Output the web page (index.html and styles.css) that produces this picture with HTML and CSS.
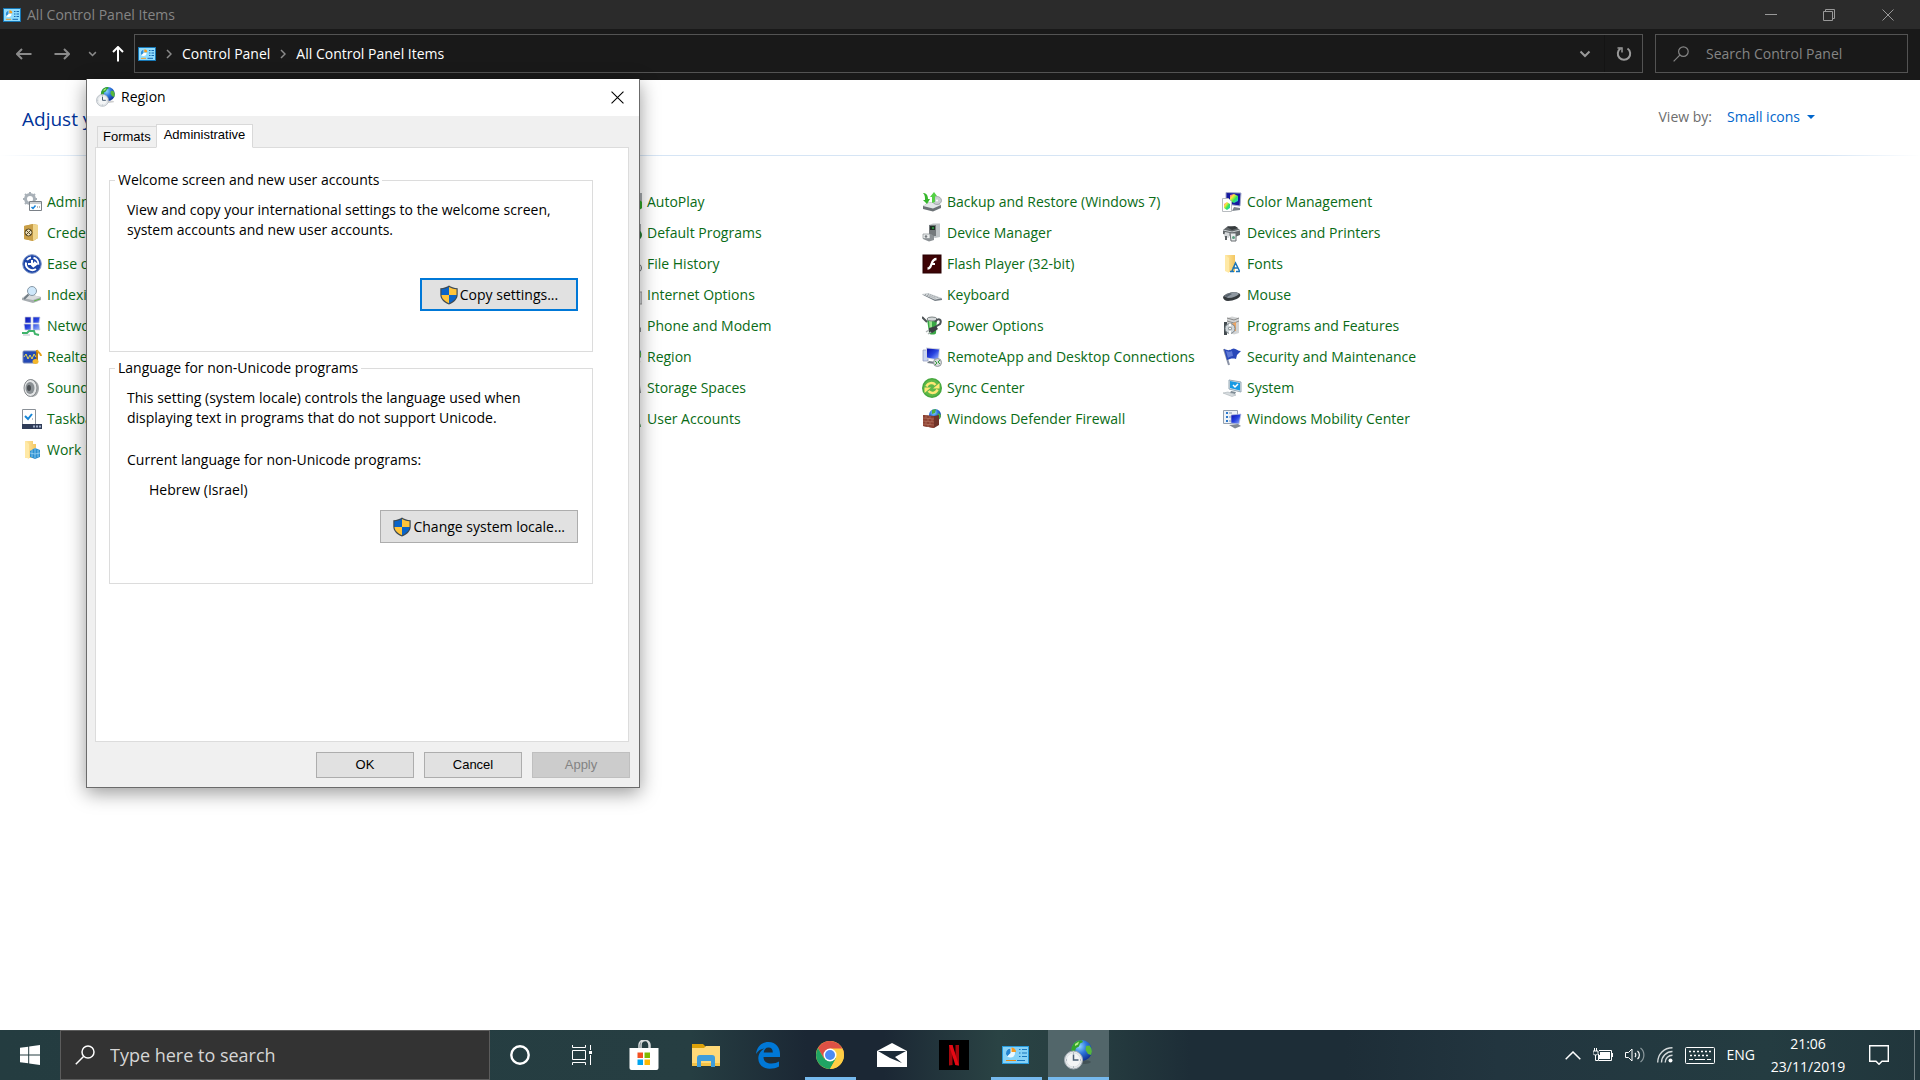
FILE: index.html
```html
<!DOCTYPE html>
<html lang="en">
<head>
    <meta charset="UTF-8">
    <meta name="viewport" content="width=device-width, initial-scale=1.0">
    <title>All Control Panel Items</title>
    <link rel="stylesheet" href="styles.css">
</head>
<body>
    <!-- shared icons and gradients -->
    <svg class="defs" aria-hidden="true">
        <defs>
            <radialGradient id="globeFill" cx="40%" cy="30%" r="75%">
                <stop offset="0" stop-color="#8fd8ff"/>
                <stop offset="0.45" stop-color="#2f77dd"/>
                <stop offset="1" stop-color="#0b2a8c"/>
            </radialGradient>
            <linearGradient id="screenFill" x1="0" y1="0" x2="1" y2="1">
                <stop offset="0" stop-color="#0a0fa8"/>
                <stop offset="0.5" stop-color="#2742e0"/>
                <stop offset="1" stop-color="#9db8ff"/>
            </linearGradient>
            <linearGradient id="metalFill" x1="0" y1="0" x2="1" y2="1">
                <stop offset="0" stop-color="#f2f2f2"/>
                <stop offset="1" stop-color="#7d8288"/>
            </linearGradient>
            <linearGradient id="folderFill" x1="0" y1="0" x2="1" y2="0">
                <stop offset="0" stop-color="#ffe9a6"/>
                <stop offset="1" stop-color="#f3c660"/>
            </linearGradient>
            <linearGradient id="rainbow" x1="0" y1="0" x2="1" y2="1">
                <stop offset="0" stop-color="#ff30d0"/>
                <stop offset="0.3" stop-color="#ffe93a"/>
                <stop offset="0.6" stop-color="#35e65a"/>
                <stop offset="1" stop-color="#20b8ff"/>
            </linearGradient>
        </defs>
        <symbol id="panel" viewBox="0 0 18 14">
            <rect width="18" height="14" fill="#1677b5"/>
            <rect x="1" y="1" width="16" height="12" fill="#8fdcff"/>
            <path d="M5.5 3a3 3 0 1 0 3 3h-3z" fill="#fff"/>
            <path d="M6.3 2.2v3h3a3 3 0 0 0-3-3z" fill="#f59b1e"/>
            <path d="M2.8 5.2a3 3 0 0 1 2.7-2.4V6l-2 2a3 3 0 0 1-.7-2.8z" fill="#2b8fd8"/>
            <path d="M11 3.5h1.5M13.5 3.5H16M11 6h1.5M13.5 6H16M11 8.5h1.5M13.5 8.5H16" stroke="#1769b0"/>
            <path d="M3 11.3h5" stroke="#f59b1e"/>
            <path d="M9.5 11.3H15" stroke="#1769b0"/>
        </symbol>
        <symbol id="region" viewBox="0 0 28 30">
            <ellipse cx="18" cy="22" rx="9" ry="2" fill="#00000030"/>
            <circle cx="17.5" cy="10.5" r="10.5" fill="url(#globeFill)"/>
            <path d="M8.500 5.500C10 2 14 0 18 .2l1 1.800-3 1.500-1 3-3 1.500-1 3.500-2.500 1.500c-2-2-1.500-5 0-7.500z" fill="#35a52c"/>
            <path d="M22 6l3.500-.5c2.500 3 3 6 1.500 9.500l-3-1-2.500-4z" fill="#57b83a"/>
            <path d="M11 4l4-2.500-1 3-3 1.500z" fill="#b9ef8a"/>
            <circle cx="9.500" cy="20" r="9" fill="#e6e9eb" stroke="#a2abb3"/>
            <circle cx="9.500" cy="20" r="7" fill="#f3f5f6" stroke="#cfd5da" stroke-width=".6"/>
            <path d="M9.500 14.500V20h5" fill="none" stroke="#4b5f74" stroke-width="1.500"/>
            <path d="M9.500 12.500v1M9.500 26.500v1M2 20h1M16 20h1" stroke="#8895a1"/>
        </symbol>
        <symbol id="shield" viewBox="0 0 18 20">
            <path d="M9 .5C7 2 4 3 .3 3.200v6.300c0 4.500 3.500 8 8.700 10 5.200-2 8.700-5.500 8.700-10V3.200C14 3 11 2 9 .5z" fill="#3f4a52"/>
            <path d="M9 2v8H1.500V4.300C4.700 4 7 3.200 9 2z" fill="#0a64c8"/>
            <path d="M9 2v8h7.500V4.300C13.300 4 11 3.200 9 2z" fill="#ffc43a"/>
            <path d="M9 10v8.300c-4-1.800-7.500-4.600-7.500-8.300z" fill="#ffc43a"/>
            <path d="M9 10v8.300c4-1.800 7.500-4.600 7.500-8.300z" fill="#0a64c8"/>
        </symbol>
        <symbol id="close" viewBox="0 0 12 12">
            <path d="M.5.5l11 11M11.500.5l-11 11" fill="none" stroke="currentColor"/>
        </symbol>
        <symbol id="down" viewBox="0 0 12 8">
            <path d="M1.500 1.500L6 6l4.500-4.500" fill="none" stroke="currentColor" stroke-width="2"/>
        </symbol>
        <symbol id="right" viewBox="0 0 6 10">
            <path d="M1 1l4 4-4 4" fill="none" stroke="currentColor" stroke-width="1.500"/>
        </symbol>
        <symbol id="magnifier" viewBox="0 0 20 20">
            <circle cx="13" cy="7" r="6" fill="none" stroke="currentColor" stroke-width="1.500"/>
            <path d="M8.500 11.500L.8 19.200" stroke="currentColor" stroke-width="1.500"/>
        </symbol>
    </svg>

    <header class="titlebar">
        <svg class="panel-icon" aria-hidden="true"><use href="#panel"/></svg>
        <span class="window-title">All Control Panel Items</span>
        <button class="window-button" aria-label="Minimize"><svg width="12" height="12" viewBox="0 0 12 12"><path d="M0 5.500h12" stroke="currentColor"/></svg></button>
        <button class="window-button" aria-label="Restore"><svg width="12" height="12" viewBox="0 0 12 12"><path d="M.5 2.500h9v9h-9zM2.500 2V.5h9v9H10" fill="none" stroke="currentColor"/></svg></button>
        <button class="window-button" aria-label="Close"><svg width="12" height="12"><use href="#close"/></svg></button>
    </header>

    <nav class="toolbar">
        <div class="nav-buttons">
            <button aria-label="Back"><svg width="16" height="12" viewBox="0 0 16 12"><path d="M6 1L1 6l5 5M1 6h14.500" fill="none" stroke="currentColor" stroke-width="2"/></svg></button>
            <button aria-label="Forward"><svg width="16" height="12" viewBox="0 0 16 12"><path d="M10 1l5 5-5 5M15 6H.5" fill="none" stroke="currentColor" stroke-width="2"/></svg></button>
            <button aria-label="Recent locations"><svg width="9" height="6"><use href="#down"/></svg></button>
            <button class="up" aria-label="Up"><svg width="12" height="16" viewBox="0 0 12 16"><path d="M1 6l5-5 5 5M6 1v14.500" fill="none" stroke="currentColor" stroke-width="2"/></svg></button>
        </div>
        <div class="address">
            <svg class="panel-icon" aria-hidden="true"><use href="#panel"/></svg>
            <svg class="crumb-arrow" aria-hidden="true"><use href="#right"/></svg>
            <a href="#">Control Panel</a>
            <svg class="crumb-arrow" aria-hidden="true"><use href="#right"/></svg>
            <a href="#">All Control Panel Items</a>
            <button class="history" aria-label="Previous locations"><svg width="12" height="8"><use href="#down"/></svg></button>
            <button class="refresh" aria-label="Refresh"><svg width="16" height="16" viewBox="0 0 16 16"><path d="M11.500 2.500a6.200 6.200 0 1 1-7 0" fill="none" stroke="currentColor" stroke-width="2"/><path d="M1.500 2h4.500v4.500" fill="none" stroke="currentColor" stroke-width="1.500"/></svg></button>
        </div>
        <label class="panel-search">
            <svg width="16" height="16" aria-hidden="true"><use href="#magnifier"/></svg>
            <input type="text" placeholder="Search Control Panel" aria-label="Search Control Panel">
        </label>
    </nav>

    <main class="content">
        <div class="content-header">
            <h1>Adjust your computer's settings</h1>
            <label for="view">View by:</label>
            <select id="view"><option>Small icons</option></select>
            <svg class="caret" width="8" height="4" viewBox="0 0 8 4" aria-hidden="true"><path d="M0 0h8L4 4z" fill="#0066cc"/></svg>
        </div>

        <div class="items">
            <ul class="column">
                <li><a href="#"><svg viewBox="0 0 20 20"><circle cx="8" cy="7" r="4.500" fill="none" stroke="#a9b1b8" stroke-width="3"/><path d="M8 0v3M8 11v3M1 7h3M12 7h3M3 2l2 2M11 10l2 2M13 2l-2 2M5 10l-2 2" stroke="#a9b1b8" stroke-width="2"/><path d="M7.500 9.500h12v9h-12z" fill="#fff" stroke="#7a8087"/><path d="M8 11h11" stroke="#9aa0a6"/><path d="M9.500 15l1.500 1.500 2.500-3" fill="none" stroke="#1580d8" stroke-width="1.500"/><path d="M15 15h1M17 15h1" stroke="#777"/></svg>Administrative Tools</a></li>
                <li><a href="#"><svg viewBox="0 0 20 20"><path d="M2 3l9-2 5 1v13l-5 3-9-2z" fill="#caa24d"/><path d="M11 1l5 1v13l-5 3z" fill="#f0d58c"/><path d="M2 3l9-2v17l-9-2z" fill="#c99f48"/><circle cx="6.500" cy="9.500" r="3.500" fill="#e8dcba" stroke="#5a4a25"/><path d="M4 7l5 5M9 7l-5 5" stroke="#5a4a25"/></svg>Credential Manager</a></li>
                <li><a href="#"><svg viewBox="0 0 20 20"><circle cx="10" cy="10" r="9.300" fill="#1d45a8" stroke="#7f97c8"/><path d="M5 6a6 6 0 0 1 4-2.500M11.500 3.700a6.500 6.500 0 0 1 4.800 7M4 8.500a6.500 6.500 0 0 0 10 6.500" fill="none" stroke="#fff" stroke-width="2"/><path d="M6 10h8M10 6v5l2 2M12 8l2.500 2-2.500 2" fill="none" stroke="#fff" stroke-width="2"/></svg>Ease of Access Center</a></li>
                <li><a href="#"><svg viewBox="0 0 20 20"><path d="M0 13l6-4 13 3v3l-8 3-11-3z" fill="#a7adb1"/><path d="M0 13l6-4 13 3-8 3z" fill="#d9dcde"/><path d="M12 16l6-2" stroke="#5fb94a"/><circle cx="10" cy="6" r="4.500" fill="#cfe8fb" stroke="#8798a6"/><path d="M6.500 9.500L2 14" stroke="#707b84" stroke-width="2"/></svg>Indexing Options</a></li>
                <li><a href="#"><svg viewBox="0 0 20 20"><path d="M3 1h6v6H3zM11 1h7l-1 6h-6zM2 8h7v6H3zM11 8h6l1 6h-7z" fill="url(#screenFill)" stroke="#c8cddd" stroke-width=".7"/><path d="M0 17h5l2-2h5l1 3 4 1" fill="none" stroke="#3eb36a" stroke-width="2"/><path d="M1 19h7" stroke="#b9c0c8"/></svg>Network and Sharing Center</a></li>
                <li><a href="#"><svg viewBox="0 0 20 20"><rect x="1" y="4" width="14" height="12" rx="1" fill="#2449b5" stroke="#7b8bb8"/><path d="M2 10l2-3 2 5 2-4 2 4 2-5 2 3" fill="none" stroke="#e9d84f"/><path d="M15 3v10" stroke="#b87a0b" stroke-width="2"/><path d="M15 3c1 3 4 3 4 6" fill="none" stroke="#e6a21c" stroke-width="2"/><ellipse cx="13.500" cy="14.500" rx="3" ry="2.500" fill="#f4b72c"/></svg>Realtek HD Audio Manager</a></li>
                <li><a href="#"><svg viewBox="0 0 20 20"><path d="M8 1c5 0 9 4 9 9s-3 9-7 9z" fill="#a7abad"/><ellipse cx="8.500" cy="10" rx="6.500" ry="8.500" fill="#e3e5e6" stroke="#85898c"/><ellipse cx="8" cy="10" rx="4.500" ry="6" fill="#8a9094"/><ellipse cx="7" cy="10" rx="2" ry="3" fill="#4a4e52"/></svg>Sound</a></li>
                <li><a href="#"><svg viewBox="0 0 20 20"><path d="M.5.500h13v16H.5z" fill="#fff" stroke="#8a9097"/><path d="M3 7l3 3 4-5" fill="none" stroke="#1685d6" stroke-width="2"/><path d="M10 10h1" stroke="#888"/><rect y="15" width="20" height="5" fill="#2f3c58"/><path d="M11 17.500h2M14 17.500h2M17 17.500h2" stroke="#a3b0ca" stroke-width="2"/></svg>Taskbar and Navigation</a></li>
                <li><a href="#"><svg viewBox="0 0 20 20"><path d="M3 1h8v3h3v14H3z" fill="url(#folderFill)"/><path d="M3 1l4 3v15l-4-2z" fill="#ffe9a6"/><path d="M8 11l5-3 5 2v7l-5 2-5-2z" fill="#2d8fd0"/><path d="M10 10v7M13 8v10M16 10v7M8 13l5 1 5-1" stroke="#a4d9f7" stroke-width=".7" fill="none"/></svg>Work Folders</a></li>
            </ul>

            <ul class="column behind">
                <li><a href="#"><svg viewBox="0 0 20 20"><rect x="2" y="1" width="18" height="10" fill="#a5a9ac"/><circle cx="16" cy="13" r="5" fill="#2ca524"/></svg>AutoPlay</a></li>
                <li><a href="#"><svg viewBox="0 0 20 20"><rect x="2" y="1" width="17" height="10" fill="#a5a9ac"/><circle cx="15" cy="12" r="5" fill="#1f7a2e"/></svg>Default Programs</a></li>
                <li><a href="#"><svg viewBox="0 0 20 20"><path d="M2 2h12v14H2z" fill="url(#folderFill)"/><circle cx="15" cy="14" r="4.500" fill="#eee" stroke="#6c7276"/></svg>File History</a></li>
                <li><a href="#"><svg viewBox="0 0 20 20"><circle cx="9" cy="9" r="7" fill="url(#globeFill)"/><rect x="11" y="7" width="9" height="12" fill="#d4d7d9" stroke="#999"/></svg>Internet Options</a></li>
                <li><a href="#"><svg viewBox="0 0 20 20"><path d="M2 12l9-8 8 8v4H2z" fill="#868b90"/></svg>Phone and Modem</a></li>
                <li><a href="#"><svg viewBox="0 0 28 30"><use href="#region"/></svg>Region</a></li>
                <li><a href="#"><svg viewBox="0 0 20 20"><path d="M1 7h17l1 8H1z" fill="url(#metalFill)"/></svg>Storage Spaces</a></li>
                <li><a href="#"><svg viewBox="0 0 20 20"><circle cx="12" cy="6" r="4" fill="#e7bd8d"/><path d="M5 18c0-9 14-9 14 0z" fill="#509a5c"/></svg>User Accounts</a></li>
            </ul>

            <ul class="column">
                <li><a href="#"><svg viewBox="0 0 20 20"><path d="M1 14l6-4 12 3v3l-8 3.500L1 17z" fill="#6d7377"/><path d="M1 14l6-4 12 3-8 3.500z" fill="#e3e6e8"/><ellipse cx="15" cy="8.500" rx="4.500" ry="4" fill="#c9cdd0" stroke="#8f9498" stroke-width=".7"/><circle cx="15" cy="8.500" r="1" fill="#fff"/><path d="M1 1c3 0 5 2 5 6h2l-3 5-4-4h2c0-3 0-5-2-7z" fill="#37b72d"/><path d="M8 5l4-5 3 4-2 .5V10l-3 1V5z" fill="#54d045"/></svg>Backup and Restore (Windows 7)</a></li>
                <li><a href="#"><svg viewBox="0 0 20 20"><path d="M7 2l4-1.500h7V14l-5 1-6-3z" fill="#bfc4c7"/><path d="M7 2h7v11H7z" fill="#74797c"/><path d="M8 3h5v4H8z" fill="#1d2d22"/><path d="M11 4v2" stroke="#35e455"/><path d="M1 11h8l3 2v4l-5 1.500L1 16z" fill="#8c9195"/><path d="M1 11h7v4.500H1z" fill="#eceeef" stroke="#8b9094" stroke-width=".7"/><circle cx="4" cy="13.500" r="1.300" fill="#777c80"/></svg>Device Manager</a></li>
                <li><a href="#"><svg viewBox="0 0 20 20"><rect x="1" y="1" width="18" height="18" fill="#3d0305" stroke="#280002"/><path d="M14.500 5c-3 0-4 2-5 5s-1.500 4.500-4 4.500" fill="none" stroke="#fff" stroke-width="2.300"/><path d="M9 10h4" stroke="#fff" stroke-width="2"/></svg>Flash Player (32-bit)</a></li>
                <li><a href="#"><svg viewBox="0 0 20 20"><path d="M0 9.500l6-1 14 5v1.500l-7 1z" fill="#747c83"/><path d="M0 9l6-1 14 5-7 1.800z" fill="#d4d8da"/><path d="M3 9.500l11 4M6 9l11 4" stroke="#8b9297" stroke-dasharray="1 1"/></svg>Keyboard</a></li>
                <li><a href="#"><svg viewBox="0 0 20 20"><path d="M5 3c0-2 10-2 10 0l-1 14c0 2-7 2-7 0z" fill="#39a845"/><path d="M7 4h3v13H8z" fill="#9be58e"/><ellipse cx="10" cy="3" rx="5" ry="2" fill="#d5d9da" stroke="#808688"/><path d="M0 1l5 5M13 6c4-5 7-2 5 2l-5 3" fill="none" stroke="#4d5356" stroke-width="2"/><path d="M7 12l7-2 2 3-6 4-3-1z" fill="#3b4043"/><path d="M7 14l-3 2M9 16l-3 2" stroke="#aaafb1" stroke-width="1.500"/></svg>Power Options</a></li>
                <li><a href="#"><svg viewBox="0 0 20 20"><path d="M1 3h5v11H1z" fill="#c9d5f2" stroke="#8a95b8" stroke-width=".7"/><path d="M4 .5l14 1-1 12-13-2z" fill="#d1d5df"/><path d="M5 1.500l12 1-1 10-11-2z" fill="url(#screenFill)"/><path d="M7 14l7 1-1 2-8-1z" fill="#747d88"/><circle cx="15.500" cy="15.500" r="4" fill="#d6d9db" stroke="#92989c"/><path d="M13 14l2 2-2 2M18 13l-2 2 2 2" fill="none" stroke="#36a23e"/></svg>RemoteApp and Desktop Connections</a></li>
                <li><a href="#"><svg viewBox="0 0 20 20"><circle cx="10" cy="10" r="10" fill="#46a83e"/><circle cx="10" cy="10" r="8.500" fill="#5fb848"/><path d="M4.500 8.500C6 4.500 11 4 13.500 7" fill="none" stroke="#ffe875" stroke-width="2.500"/><path d="M17.500 5v5.500H11z" fill="#ffe875"/><path d="M15.500 11.500C14 15.500 9 16 6.500 13" fill="none" stroke="#ffe875" stroke-width="2.500"/><path d="M2.500 15V9.500H9z" fill="#ffe875"/></svg>Sync Center</a></li>
                <li><a href="#"><svg viewBox="0 0 20 20"><circle cx="13" cy="6" r="6" fill="url(#globeFill)"/><path d="M10 1l4-1-1 4-3 1zM16 4l3 2-1 4-3-2z" fill="#4db13c"/><path d="M1 6l11 1 5-1v10l-5 3-11-2z" fill="#6f3328"/><path d="M1 6l11 1.500V19L1 17z" fill="#8d4132"/><path d="M1 9l11 1M1 12l11 1M1 15l11 1M4 6v3M8 7v3M6 9v3M10 10v3M4 12v3M8 13v3M6 15v3" stroke="#b97a67" stroke-width=".6"/></svg>Windows Defender Firewall</a></li>
            </ul>

            <ul class="column">
                <li><a href="#"><svg viewBox="0 0 20 20"><path d="M4 .5l15 .5-1 13-14-2z" fill="#15199f" stroke="#a6acc9"/><path d="M8 3l4-1 4 2v5l-4 2-4-2z" fill="url(#rainbow)"/><path d="M12 15l6 1v2l-8 1z" fill="#7b828a"/><path d="M.5 6.500h6l3 3v10H.500z" fill="#fff" stroke="#b8bcc0"/><path d="M2 12l3-2 3 2v4l-3 2-3-2z" fill="url(#rainbow)"/></svg>Color Management</a></li>
                <li><a href="#"><svg viewBox="0 0 20 20"><path d="M1 7l5-4 8 1 4 3v5l-5 2-12-3z" fill="#606568"/><path d="M5 4l8-1 3 2-6 2z" fill="#363b3d"/><path d="M1 7l9 2 8-2" fill="none" stroke="#cbd0d2"/><path d="M3 9l5 1-1 5-5-1z" fill="#d5d8da"/><path d="M8 10h6v8H9z" fill="#e8ebec" stroke="#686d70"/><circle cx="11.500" cy="14.500" r="1.500" fill="#5c9f83"/><path d="M4 13v4" stroke="#5b6063" stroke-width="2"/></svg>Devices and Printers</a></li>
                <li><a href="#"><svg viewBox="0 0 20 20"><path d="M3 1h10v17H6z" fill="url(#folderFill)"/><path d="M3 1l4 3v15l-4-2z" fill="#ffe9a6"/><path d="M8 17.500h4M14 17.500h4M10 17l3.500-8 4 8M10.500 14h5" fill="none" stroke="#1b74b8" stroke-width="1.500"/></svg>Fonts</a></li>
                <li><a href="#"><svg viewBox="0 0 20 20"><path d="M1 12c3-5 14-6 17-3 2 4-7 7-12 7-3 0-5-2-5-4z" fill="#34393d"/><path d="M2 11c4-4 13-5 15-2-2 2-6 4-11 4z" fill="#8f98a1"/><path d="M2 11l6-3 2 1-5 3z" fill="#59636d"/></svg>Mouse</a></li>
                <li><a href="#"><svg viewBox="0 0 20 20"><path d="M5 2l5-1.500 7 1.500v15l-5 1.500-7-3z" fill="#d2d4d5"/><path d="M5 2l7 2 5-2M5 5l7 2 5-2" fill="none" stroke="#888"/><path d="M9 8l5-2v9H9z" fill="#eba564"/><path d="M2 6h3v13H2z" fill="#444c51"/><circle cx="8" cy="12.500" r="5" fill="#cfd6da" stroke="#788186"/><path d="M8 7.500v4M8 14v4" stroke="#fff" stroke-width="2"/><circle cx="8" cy="12.500" r="1.500" fill="#fff" stroke="#7c8589"/></svg>Programs and Features</a></li>
                <li><a href="#"><svg viewBox="0 0 20 20"><path d="M2 2l5 16" stroke="#8b93a6" stroke-width="2"/><path d="M2 2c3 1 5 2 8 0s5 2 9 2l-4 4-1 4c-4-1-6 0-9 1z" fill="#2947b9"/><path d="M4 4c3 1 4 1 6 0l1 5c-2 0-4 1-5 2z" fill="#5f79d6"/></svg>Security and Maintenance</a></li>
                <li><a href="#"><svg viewBox="0 0 20 20"><path d="M7 2l12 2v10L7 11z" fill="#d9e3e9" stroke="#95a8b5"/><path d="M8 3l10 2v7.500L8 10z" fill="#179ae3"/><path d="M11 7l2 2 3-3" fill="none" stroke="#fff" stroke-width="1.500"/><path d="M9 13l5 1-1 2-5-1z" fill="#7e8b94"/><path d="M1 15l5-1 8 3-4 1.500z" fill="#d7dcdf" stroke="#a9b1b7" stroke-width=".6"/></svg>System</a></li>
                <li><a href="#"><svg viewBox="0 0 20 20"><path d="M1.500 1.500h14v13h-14z" fill="#eef3f8" stroke="#94a0af"/><path d="M4 4h2M4 8h2M4 12h2" stroke="#2b78cd" stroke-width="2"/><path d="M7 4h3M7 8h3M7 12h3" stroke="#7f91a5"/><path d="M9 6l10-1-2 10-8-1z" fill="url(#screenFill)" stroke="#bcc5df" stroke-width=".7"/><path d="M7 16l9-1 3 2-6 2.500z" fill="#828a94"/></svg>Windows Mobility Center</a></li>
            </ul>
        </div>
    </main>

    <section class="dialog" role="dialog" aria-labelledby="dialog-title">
        <div class="dialog-title">
            <svg width="19" height="20" aria-hidden="true"><use href="#region"/></svg>
            <h2 id="dialog-title">Region</h2>
            <button aria-label="Close dialog"><svg width="13" height="13"><use href="#close"/></svg></button>
        </div>
        <div class="tabs" role="tablist">
            <button class="tab" role="tab" aria-selected="false">Formats</button>
            <button class="tab active" role="tab" aria-selected="true">Administrative</button>
        </div>
        <div class="tab-panel" role="tabpanel">
            <fieldset>
                <legend>Welcome screen and new user accounts</legend>
                <p>View and copy your international settings to the welcome screen, system accounts and new user accounts.</p>
                <button class="shield-button focused copy"><svg width="18" height="20" aria-hidden="true"><use href="#shield"/></svg>Copy settings...</button>
            </fieldset>
            <fieldset>
                <legend>Language for non-Unicode programs</legend>
                <p>This setting (system locale) controls the language used when displaying text in programs that do not support Unicode.</p>
                <p class="current">Current language for non-Unicode programs:</p>
                <p class="locale">Hebrew (Israel)</p>
                <button class="shield-button"><svg width="18" height="20" aria-hidden="true"><use href="#shield"/></svg>Change system locale...</button>
            </fieldset>
        </div>
        <div class="dialog-buttons">
            <button>OK</button>
            <button>Cancel</button>
            <button disabled>Apply</button>
        </div>
    </section>

    <footer class="taskbar">
        <button class="start" aria-label="Start"><svg width="20" height="20" viewBox="0 0 20 20"><path d="M0 2.800L8.200 1.700v7.800H0zM9.200 1.500L20 0v9.500H9.200zM0 10.500h8.200v7.800L0 17.200zM9.200 10.500H20V20L9.200 18.500z" fill="#fff"/></svg></button>
        <label class="task-search">
            <svg width="20" height="20" aria-hidden="true"><use href="#magnifier"/></svg>
            <input type="text" placeholder="Type here to search" aria-label="Type here to search">
        </label>
        <div class="apps">
            <button class="app" aria-label="Cortana"><svg width="20" height="20" viewBox="0 0 20 20"><circle cx="10" cy="10" r="8.700" fill="none" stroke="#fff" stroke-width="2.400"/></svg></button>
            <button class="app" aria-label="Task View"><svg width="20" height="20" viewBox="0 0 20 20"><path d="M.5 5.500h13v9H.5zM.5 0v2.500h13V0M.5 20v-2.500h13V20M18.500 0v5M18.500 10v10" fill="none" stroke="#fff"/><rect x="17" y="6" width="3" height="3" fill="#fff"/></svg></button>
            <button class="app" aria-label="Microsoft Store"><svg width="30" height="30" viewBox="0 0 30 30"><path d="M10 8V5a5 5 0 0 1 10 0v3M12 8V5a4 4 0 0 1 9 0v3" fill="none" stroke="#d8dcdd" stroke-width="1.500"/><path d="M.5 8h29v20a2 2 0 0 1-2 2h-25a2 2 0 0 1-2-2z" fill="#fff"/><path d="M8.500 12.500H14V18H8.500z" fill="#f25022"/><path d="M15.500 12.500H21V18h-5.500z" fill="#7fba00"/><path d="M8.500 19.500H14V25H8.500z" fill="#00a4ef"/><path d="M15.500 19.500H21V25h-5.500z" fill="#ffb900"/></svg></button>
            <button class="app" aria-label="File Explorer"><svg width="28" height="24" viewBox="0 0 28 24"><path d="M0 1h11l3 3v4H0z" fill="#dca108"/><path d="M0 5h12l2-2h14v20H0z" fill="#ffd978"/><path d="M0 20h28v3H0z" fill="#f4c347"/><path d="M5 24v-9a3 3 0 0 1 3-3h12a3 3 0 0 1 3 3v9h-4v-6H9v6z" fill="#3f9ddb"/></svg></button>
            <button class="app" aria-label="Edge"><svg width="26" height="28" viewBox="0 0 26 28"><path d="M1 13C2 5 7 1 13.500 1 21 1 25 7 25 13v3H8.500c0 5 4 6.500 8 6.500 3 0 5.500-.8 7.500-2v5c-2.500 1.500-6 2.200-9.500 2.200C7.500 27.700 3.300 23 3.300 17.500 3.300 13 6 9.500 9.500 7.500 5.500 8 3 10 1 13zM8.700 11.500h9.100c0-3.500-1.500-5-4.300-5s-4.500 2-4.800 5z" fill="#0078d7"/></svg></button>
            <button class="app running" aria-label="Chrome"><svg width="28" height="28" viewBox="0 0 28 28"><circle cx="14" cy="14" r="14" fill="#ffce44"/><path d="M14 14H28A14 14 0 0 0 1.900 7l6 10.500z" fill="#de5145"/><path d="M1.900 7A14 14 0 0 0 14 28l6-10.500L14 14l-6 3.500z" fill="#1fa463"/><path d="M14 7.500h12.400A14 14 0 0 1 14 28l6-10.500z" fill="#ffce44"/><circle cx="14" cy="14" r="6.500" fill="#fff"/><circle cx="14" cy="14" r="5" fill="#4c8bf5"/></svg></button>
            <button class="app" aria-label="Mail"><svg width="30" height="24" viewBox="0 0 30 24"><path d="M0 8L15 0l15 8v16H0z" fill="#fff"/><path d="M1 8h28l-11 6 7 6-12-5z" fill="#1c2b38"/></svg></button>
            <button class="app" aria-label="Netflix"><svg width="30" height="30" viewBox="0 0 30 30"><path d="M0 0h30v30H0z"/><path d="M10 5h3.500v20l-3.500.5zM16.500 5H20v20.500l-3.500-.5z" fill="#a5070d"/><path d="M10 5h3.500L20 25.500l-3.700-.5z" fill="#e50914"/></svg></button>
            <button class="app running" aria-label="All Control Panel Items"><svg width="27" height="18" viewBox="0 0 27 18"><path d="M0 0h27v18H0z" fill="#279bdc"/><path d="M1 1h25v16H1z" fill="#86d2f7"/><circle cx="8.500" cy="7" r="4.500" fill="#e9f8ff"/><path d="M8.500 7V2.500a4.500 4.500 0 0 0-3.200 7.700z" fill="#2485d1"/><path d="M9.500 6V1.500A4.500 4.500 0 0 1 14 6z" fill="#f49a21"/><path d="M17 3.500h1.500M20 3.500h5M17 7h1.500M20 7h5M17 10.500h1.500M20 10.500h5M15 14.500h8" stroke="#1676bd"/><path d="M4 14.500h10" stroke="#e58a16"/></svg></button>
            <button class="app active" aria-label="Region"><svg width="28" height="30"><use href="#region"/></svg></button>
        </div>
        <div class="tray">
            <button aria-label="Show hidden icons"><svg width="16" height="9" viewBox="0 0 16 9"><path d="M.7 8.300L8 1l7.300 7.300" fill="none" stroke="#fff" stroke-width="1.500"/></svg></button>
            <button aria-label="Battery"><svg width="20" height="14" viewBox="0 0 20 14"><path d="M0 3h5v2.500L3.500 7h-2L0 5.500zM1.500 0v3M3.500 0v3M2.500 7v5.500H5" fill="none" stroke="#fff"/><path d="M6 2.500h12.500v10h-13V6" fill="none" stroke="#fff"/><path d="M7 4h10v7H5V7h2zM19 5h1v4h-1z" fill="#fff"/></svg></button>
            <button aria-label="Volume"><svg width="20" height="18" viewBox="0 0 20 18"><path d="M.5 6.500h3L7 3v12l-3.500-3.500h-3z" fill="none" stroke="#fff"/><path d="M10 7c1 1 1 3 0 4M12.500 5c2.500 2 2.500 6 0 8" fill="none" stroke="#fff" stroke-width="1.200"/><path d="M15.500 2c4.500 3.500 4.500 10.500 0 14" fill="none" stroke="#8c999d" stroke-width="1.200"/></svg></button>
            <button aria-label="Network"><svg width="16" height="16" viewBox="0 0 16 16"><path d="M.7 15.500C.7 7 7 .7 15.500.7M4.500 15.500C4.500 9.500 9.500 4.500 15.500 4.500M8.200 15.500c0-4 3.300-7.300 7.300-7.300" fill="none" stroke="#d5dadb" stroke-width="1.400"/><circle cx="13.500" cy="13.500" r="2" fill="#fff"/></svg></button>
            <button aria-label="Touch keyboard"><svg width="30" height="17" viewBox="0 0 30 17"><rect x=".5" y=".5" width="29" height="16" rx="1" fill="none" stroke="#fff"/><path d="M4 4.500h22M5 8.500h20" stroke="#fff" stroke-width="1.500" stroke-dasharray="2 2"/><path d="M4 12.500h4M10 12.500h10M22 12.500h4" stroke="#fff"/></svg></button>
            <button class="language">ENG</button>
            <button class="clock"><span>21:06</span><span>23/11/2019</span></button>
            <button class="notifications" aria-label="Notifications"><svg width="20" height="20" viewBox="0 0 20 20"><path d="M.7.7h18.600v15.600H13l-3 3-3-3H.700z" fill="none" stroke="#fff" stroke-width="1.400"/></svg></button>
        </div>
    </footer>
</body>
</html>
```

FILE: styles.css
```css
/* page styles */
* {
    box-sizing: border-box;
}

body {
    margin: 0;
    min-height: 100vh;
    display: flex;
    flex-direction: column;
    position: relative;
    background-color: #FFFFFF;
    color: #000000;
    font-family: "Open Sans", "Noto Sans", sans-serif;
    font-size: 14px;
    line-height: 20px;
}

button, input, select {
    font: inherit;
    color: inherit;
    background: none;
    border: none;
    padding: 0;
    margin: 0;
}

button {
    display: flex;
    align-items: center;
    justify-content: center;
}

a {
    color: inherit;
    text-decoration: none;
}

svg {
    flex: none;
    display: block;
}

.defs {
    position: absolute;
    width: 0;
    height: 0;
}

.panel-icon {
    width: 18px;
    height: 14px;
}

/* window title bar */
.titlebar {
    display: flex;
    align-items: center;
    height: 29px;
    padding: 0 2px 0 3px;
    background-color: #2B2B2B;
    color: #858585;
}

.window-title {
    flex: 1;
    margin-left: 6px;
}

.window-button {
    width: 58px;
    height: 29px;
    color: #999999;
}

.window-button:last-child {
    width: 60px;
}

/* navigation bar */
.toolbar {
    display: flex;
    align-items: center;
    height: 51px;
    padding: 0 12px 2px 16px;
    background-color: #191919;
    color: #FFFFFF;
}

.nav-buttons {
    display: flex;
    align-items: center;
    width: 118px;
    color: #8A8A8A;
}

.nav-buttons button {
    height: 39px;
    margin-right: 22px;
}

.nav-buttons button:nth-child(2) {
    margin-right: 18px;
}

.nav-buttons button:nth-child(3) {
    margin-right: 15px;
}

.nav-buttons .up {
    color: #FFFFFF;
    margin-right: 0;
}

.address {
    flex: 1;
    display: flex;
    align-items: center;
    height: 39px;
    padding-left: 3px;
    border: 1px solid #535353;
}

.crumb-arrow {
    width: 6px;
    height: 10px;
    margin: 0 10px;
    color: #8A8A8A;
}

.history {
    margin-left: auto;
    width: 38px;
    height: 37px;
    color: #999999;
}

.refresh {
    width: 38px;
    height: 37px;
    border-left: 1px solid #141414;
    color: #999999;
}

.panel-search {
    display: flex;
    align-items: center;
    width: 253px;
    height: 39px;
    margin-left: 12px;
    padding-left: 17px;
    border: 1px solid #535353;
    color: #858585;
}

.panel-search input {
    flex: 1;
    min-width: 0;
    margin-left: 17px;
}

input::placeholder {
    color: inherit;
    opacity: 1;
}

/* control panel items */
.content {
    flex: 1;
}

.content-header {
    display: flex;
    align-items: center;
    height: 76px;
    padding: 0 105px 2px 22px;
    border-bottom: 1px solid;
    border-image: linear-gradient(to right, #FFFFFF, #D6E5F5 5%, #D6E5F5 95%, #FFFFFF) 1;
    color: #6D6D6D;
}

h1 {
    flex: 1;
    margin: 0;
    padding-top: 4px;
    font-size: 19px;
    font-weight: 400;
    line-height: 28px;
    color: #003399;
}

.content-header select {
    appearance: none;
    margin-left: 15px;
    color: #0066CC;
}

.caret {
    margin-left: 6px;
}

.items {
    display: grid;
    grid-template-columns: repeat(5, 300px);
    padding: 30px 22px;
}

.column {
    margin: 0;
    padding: 0;
    list-style: none;
}

/* second track sits under the open dialog */
.behind {
    grid-column: 3;
}

.column a {
    display: flex;
    align-items: center;
    gap: 5px;
    height: 31px;
    color: #0A6B16;
    white-space: nowrap;
}

.column svg {
    width: 20px;
    height: 20px;
}

/* region dialog */
.dialog {
    position: absolute;
    left: 86px;
    top: 79px;
    width: 554px;
    background-color: #F0F0F0;
    border: 1px solid #6B6B6B;
    border-top: none;
    box-shadow: 0 5px 18px rgba(0, 0, 0, 0.4);
}

.dialog-title {
    display: flex;
    align-items: center;
    height: 37px;
    padding: 0 15px 1px 9px;
    background-color: #FFFFFF;
}

.dialog-title h2 {
    flex: 1;
    margin: 0 0 0 6px;
    font-size: 14px;
    font-weight: 400;
}

.tabs {
    display: flex;
    align-items: flex-end;
    height: 32px;
    padding-left: 10px;
    margin-bottom: -1px;
    position: relative;
    font-family: "Liberation Sans", Arial, sans-serif;
    font-size: 13px;
}

.tab {
    height: 22px;
    padding: 0 5px;
    border: 1px solid #D9D9D9;
    border-right: none;
}

.tab.active {
    height: 24px;
    padding: 0 7px 2px;
    background-color: #FFFFFF;
    border-right: 1px solid #D9D9D9;
    border-bottom-color: #FFFFFF;
}

.tab-panel {
    min-height: 595px;
    margin: 0 10px 0 8px;
    padding: 22px 35px 22px 13px;
    background-color: #FFFFFF;
    border: 1px solid #DCDCDC;
}

fieldset {
    min-width: 0;
    margin: 0 0 6px;
    padding: 10px 14px 40px 17px;
    border: 1px solid #DCDCDC;
}

legend {
    margin-left: -12px;
    padding: 0 3px;
}

fieldset p {
    margin: 0;
}

fieldset .current {
    margin-top: 22px;
}

fieldset .locale {
    margin: 10px 0 0 22px;
}

.shield-button {
    gap: 2px;
    min-width: 158px;
    height: 33px;
    margin: 10px 0 0 auto;
    padding: 0 12px;
    background-color: #E1E1E1;
    border: 1px solid #ADADAD;
}

.shield-button.focused {
    border: 2px solid #0078D7;
}

.shield-button.copy {
    margin-top: 38px;
}

.dialog-buttons {
    display: flex;
    justify-content: flex-end;
    gap: 10px;
    padding: 10px 9px 9px;
    font-family: "Liberation Sans", Arial, sans-serif;
    font-size: 13px;
}

.dialog-buttons button {
    width: 98px;
    height: 26px;
    background-color: #E1E1E1;
    border: 1px solid #ADADAD;
}

.dialog-buttons button:disabled {
    background-color: #CCCCCC;
    border-color: #BFBFBF;
    color: #838383;
}

/* taskbar */
.taskbar {
    display: flex;
    height: 50px;
    background: linear-gradient(to right, #243C40 0, #263E42 36%, #1B2734 42%, #1B2734 46%, #2A4344 52%, #263D40 57%, #1D2D37 62%, #1D2D37 70%, #22353F 78%, #243C41 92%, #21363C 100%);
    color: #FFFFFF;
}

.start {
    width: 60px;
}

.task-search {
    display: flex;
    align-items: center;
    width: 430px;
    padding-left: 14px;
    background-color: #333333;
    border: 1px solid #5C5C5C;
}

.task-search input {
    flex: 1;
    min-width: 0;
    margin-left: 15px;
    font-size: 18px;
    line-height: 24px;
    color: #D6D6D6;
}

.apps {
    display: flex;
    gap: 1px;
}

.app {
    width: 61px;
    height: 50px;
    padding-right: 2px;
    position: relative;
}

.app.active {
    background-color: #52666A;
}

/* line under open programs */
.app.running::after, .app.active::after {
    content: "";
    position: absolute;
    left: 5px;
    right: 5px;
    bottom: 0;
    height: 3px;
    background-color: #76B9ED;
}

.app.active::after {
    left: 0;
    right: 0;
}

.tray {
    display: flex;
    gap: 12px;
    margin-left: auto;
    padding-right: 5px;
}

.clock {
    flex-direction: column;
    width: 82px;
    line-height: 23px;
}

.notifications {
    width: 54px;
    padding-right: 17px;
    border-right: 1px solid #728084;
}
```
